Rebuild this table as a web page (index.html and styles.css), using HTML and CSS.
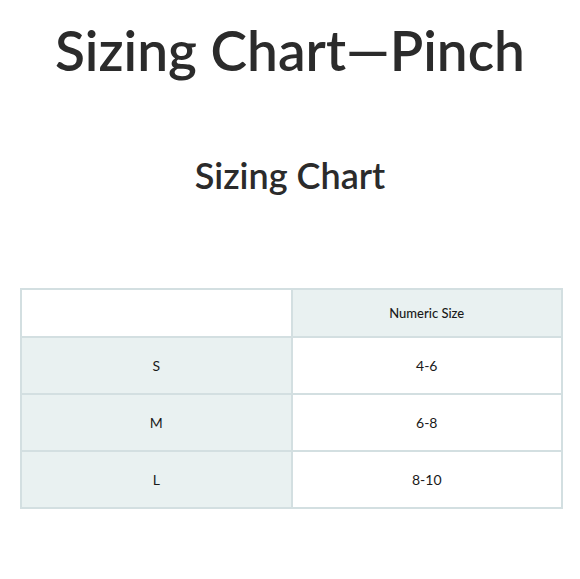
FILE: index.html
```html
<!DOCTYPE html>
<html>
<head>
<meta charset="utf-8">
<link rel="stylesheet" href="styles.css">
</head>
<body>
<div class="page">
  <h1 class="title">Sizing Chart—Pinch</h1>
  <h2 class="subtitle">Sizing Chart</h2>
  <table class="chart">
    <thead>
      <tr><th class="blank"></th><th class="shade">Numeric Size</th></tr>
    </thead>
    <tbody>
      <tr><td class="shade">S</td><td>4-6</td></tr>
      <tr><td class="shade">M</td><td>6-8</td></tr>
      <tr><td class="shade">L</td><td>8-10</td></tr>
    </tbody>
  </table>
</div>
</body>
</html>
```
FILE: styles.css
```css
html, body { margin: 0; padding: 0; background: #fff; }
.page { width: 580px; display: flex; flex-direction: column; align-items: center; }
.title {
  font-family: "Lato", sans-serif;
  font-weight: 600;
  font-size: 55px;
  color: #2b2b2b;
  margin: 19px 0 0;
  line-height: 62px;
}
.subtitle {
  font-family: "Lato", sans-serif;
  font-weight: 600;
  font-size: 36px;
  color: #2b2b2b;
  margin: 73px 0 0;
  line-height: 42px;
}
.chart {
  margin: 92px 0 0 3px;
  width: 543px;
  border-collapse: collapse;
  font-family: "Lato", sans-serif;
  color: #1a1a1a;
}
.chart th, .chart td {
  border: 2px solid #d3dfe1;
  text-align: center;
  width: 50%;
  padding: 0;
}
.chart th { height: 46px; font-size: 13px; font-weight: 500; }
.chart td { height: 55px; font-size: 14px; }
.shade { background: #e9f1f1; }
```
